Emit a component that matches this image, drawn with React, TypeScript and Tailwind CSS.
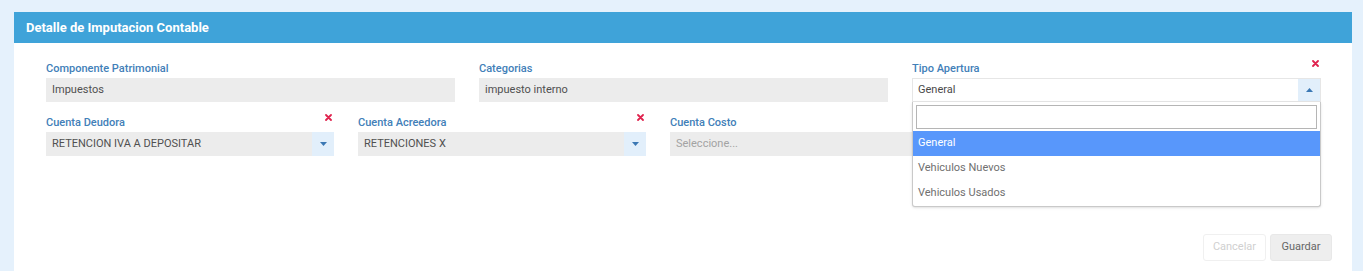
import { type ReactNode } from 'react';

const font = { fontFamily: 'Roboto, "Liberation Sans", sans-serif' };

function RemoveMark() {
  return (
    <svg width="7" height="7" viewBox="0 0 7 7" className="absolute right-[2px] -top-[2px]">
      <path d="M1 1 L6 6 M6 1 L1 6" stroke="#e0234e" strokeWidth="1.8" strokeLinecap="round" />
    </svg>
  );
}

function Caret({ up = false }: { up?: boolean }) {
  return (
    <span className="flex h-full w-[22px] items-center justify-center bg-[#e2effb]">
      <svg width="7" height="4" viewBox="0 0 7 4">
        <path d={up ? 'M0 4 L3.5 0 L7 4 Z' : 'M0 0 L7 0 L3.5 4 Z'} fill="#3b78b4" />
      </svg>
    </span>
  );
}

interface FieldProps {
  label: string;
  removable?: boolean;
  children: ReactNode;
}

function Field({ label, removable, children }: FieldProps) {
  return (
    <div className="relative">
      <div className="relative flex h-[16px] items-start">
        <span className="text-[11px] font-medium leading-[13px] text-[#4280b8]">{label}</span>
        {removable && <RemoveMark />}
      </div>
      {children}
    </div>
  );
}

function TextBox({ value }: { value: string }) {
  return (
    <div className="flex h-[24px] items-center bg-[#ececec] px-[6px] text-[11px] text-[#505050]">
      {value}
    </div>
  );
}

function SelectBox({ value, placeholder }: { value?: string; placeholder?: string }) {
  return (
    <div className="flex h-[24px] items-center bg-[#ececec] text-[11px]">
      <span className={`flex-1 px-[6px] ${value ? 'text-[#505050]' : 'text-[#a3a3a3]'}`}>
        {value ?? placeholder}
      </span>
      {value && <Caret />}
    </div>
  );
}

const opciones = ['General', 'Vehiculos Nuevos', 'Vehiculos Usados'];

function OpenSelect() {
  return (
    <div className="relative">
      <div className="flex h-[24px] items-center border border-[#e6e6e6] bg-white text-[11px]">
        <span className="flex-1 px-[5px] text-[#4a4a4a]">General</span>
        <Caret up />
      </div>
      <div className="absolute left-0 right-0 top-full z-10 rounded-b-[3px] border border-t-0 border-[#c9c9c9] bg-white shadow-sm">
        <div className="px-[3px] pb-[2px] pt-[3px]">
          <div className="h-[24px] border border-[#b5b5b5] bg-white" />
        </div>
        {opciones.map((o, i) => (
          <div
            key={o}
            className={`flex h-[25px] items-center px-[5px] text-[11px] ${
              i === 0 ? 'bg-[#5897fb] text-white' : 'text-[#707070]'
            }`}
          >
            {o}
          </div>
        ))}
      </div>
    </div>
  );
}

export default function App() {
  return (
    <div className="min-h-[271px] bg-[#e5f1fc] pl-[14px] pr-[11px] pt-[12px]" style={font}>
      <div className="min-h-[259px] bg-white">
        <div className="flex h-[31px] items-center bg-[#3fa3d9] px-3 text-[13px] font-bold text-white">
          Detalle de Imputacion Contable
        </div>
        <div className="px-8 pt-[19px]">
          <div className="grid grid-cols-[409px_409px_409px] gap-x-6">
            <Field label="Componente Patrimonial">
              <TextBox value="Impuestos" />
            </Field>
            <Field label="Categorias">
              <TextBox value="impuesto interno" />
            </Field>
            <div className="z-10">
              <Field label="Tipo Apertura" removable>
                <OpenSelect />
              </Field>
            </div>
          </div>
          <div className="mt-[14px] grid grid-cols-[288px_288px_288px_288px] gap-x-6">
            <Field label="Cuenta Deudora" removable>
              <SelectBox value="RETENCION IVA A DEPOSITAR" />
            </Field>
            <Field label="Cuenta Acreedora" removable>
              <SelectBox value="RETENCIONES X" />
            </Field>
            <Field label="Cuenta Costo">
              <SelectBox placeholder="Seleccione..." />
            </Field>
          </div>
        </div>
        <div className="mt-[78px] flex justify-end gap-1 pr-5">
          <button className="h-[27px] w-[63px] rounded-[3px] border border-[#f0f0f0] bg-white text-[11px] text-[#d0d0d0]">
            Cancelar
          </button>
          <button className="h-[27px] w-[62px] rounded-[3px] border border-[#e8e8e8] bg-[#eeeeee] text-[11px] text-[#666]">
            Guardar
          </button>
        </div>
      </div>
    </div>
  );
}
